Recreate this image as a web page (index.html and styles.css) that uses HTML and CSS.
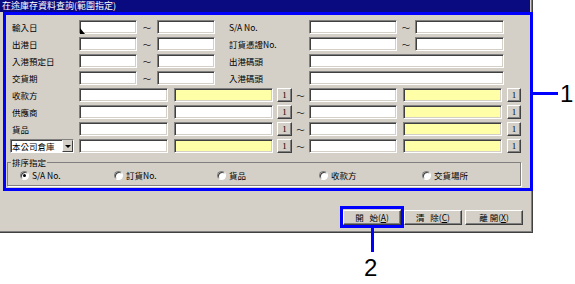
FILE: index.html
```html
<!DOCTYPE html>
<html lang="zh-Hant">
<head>
    <meta charset="UTF-8">
    <title>在途庫存資料查詢</title>
    <link rel="stylesheet" href="styles.css">
</head>
<body>
<div class="page">
    <div class="window">
        <div class="titlebar">在途庫存資料查詢(範圍指定)</div>

        <div class="fields">
            <div class="row">
                <span class="label">輸入日</span>
                <span class="box w58 first"></span>
                <span class="tilde">〜</span>
                <span class="box w58"></span>
                <span class="label label2">S/A No.</span>
                <span class="box w88"></span>
                <span class="tilde t18">〜</span>
                <span class="box w89"></span>
            </div>
            <div class="row">
                <span class="label">出港日</span>
                <span class="box w58"></span>
                <span class="tilde">〜</span>
                <span class="box w58"></span>
                <span class="label label2">訂貨憑證No.</span>
                <span class="box w88"></span>
                <span class="tilde t18">〜</span>
                <span class="box w89"></span>
            </div>
            <div class="row">
                <span class="label">入港預定日</span>
                <span class="box w58"></span>
                <span class="tilde">〜</span>
                <span class="box w58"></span>
                <span class="label label2">出港碼頭</span>
                <span class="box w195"></span>
            </div>
            <div class="row">
                <span class="label">交貨期</span>
                <span class="box w58"></span>
                <span class="tilde">〜</span>
                <span class="box w58"></span>
                <span class="label label2">入港碼頭</span>
                <span class="box w195"></span>
            </div>

            <div class="row">
                <span class="label">收款方</span>
                <span class="box w89"></span>
                <span class="box yellow"></span>
                <span class="pick">1</span>
                <span class="tilde t17">〜</span>
                <span class="box w88"></span>
                <span class="box yellow"></span>
                <span class="pick last">1</span>
            </div>
            <div class="row">
                <span class="label">供應商</span>
                <span class="box w89"></span>
                <span class="box plain"></span>
                <span class="pick">1</span>
                <span class="tilde t17">〜</span>
                <span class="box w88"></span>
                <span class="box yellow"></span>
                <span class="pick last">1</span>
            </div>
            <div class="row">
                <span class="label">貨品</span>
                <span class="box w89"></span>
                <span class="box plain"></span>
                <span class="pick">1</span>
                <span class="tilde t17">〜</span>
                <span class="box w88"></span>
                <span class="box yellow"></span>
                <span class="pick last">1</span>
            </div>
            <div class="row">
                <span class="select">本公司倉庫<span class="drop"></span></span>
                <span class="box w89"></span>
                <span class="box yellow"></span>
                <span class="pick">1</span>
                <span class="tilde t17">〜</span>
                <span class="box w88"></span>
                <span class="box yellow"></span>
                <span class="pick last">1</span>
            </div>
        </div>

        <fieldset class="group">
            <legend>排序指定</legend>
            <div class="radios">
                <span class="radio r1"><span class="dot checked"></span>S/A No.</span>
                <span class="radio r2"><span class="dot"></span>訂貨No.</span>
                <span class="radio r3"><span class="dot"></span>貨品</span>
                <span class="radio r2"><span class="dot"></span>收款方</span>
                <span class="radio"><span class="dot"></span>交貨場所</span>
            </div>
        </fieldset>

        <div class="actions">
            <span class="btn">開&nbsp;&nbsp;&nbsp;始(<u>A</u>)</span>
            <span class="btn">清&nbsp;&nbsp;&nbsp;除(<u>C</u>)</span>
            <span class="btn">離&nbsp;開(<u>X</u>)</span>
        </div>
    </div>

    <!-- callouts -->
    <svg class="cursor" width="6" height="6" viewBox="0 0 6 6"><polygon points="0,0 0,6 5,6" fill="#000"/></svg>
    <div class="mark mark1"></div>
    <div class="lead lead1"></div>
    <div class="num num1">1</div>
    <div class="mark mark2"></div>
    <div class="lead lead2"></div>
    <div class="num num2">2</div>
</div>
</body>
</html>
```

FILE: styles.css
```css
body{
    margin: 0;
    background: #fff;
    font-family: "Noto Sans CJK TC", sans-serif;
    font-size: 8.5px;
    color: #000;
}
.page{
    position: relative;
    width: 575px;
    height: 284px;
}
.window{
    width: 533px;
    height: 233px;
    box-sizing: border-box;
    background: #d4d0c8;
    border-right: 1px solid #404040;
    border-bottom: 1px solid #404040;
    box-shadow: inset -1px -1px #808080;
    padding: 0 2px 2px 0;
}
.titlebar{
    height: 12px;
    background: #0a0a80;
    color: #fff;
    font-size: 9px;
    line-height: 12px;
    padding-left: 2px;
    white-space: nowrap;
}

/* input rows */
.fields{
    padding: 8px 0 0 12px;
}
.row{
    display: flex;
    align-items: center;
    height: 14px;
    margin-bottom: 3px;
}
.label{
    width: 67px;
    flex: none;
    white-space: nowrap;
    line-height: 14px;
}
.label2{
    width: 80px;
    margin-left: 14px;
}
.box{
    flex: none;
    height: 14px;
    box-sizing: border-box;
    background: #fff;
    border: 1px solid;
    border-color: #808080 #fff #fff #808080;
    box-shadow: inset 1px 1px #404040, inset -1px -1px #d4d0c8;
}
.w58{ width: 58px; }
.w88{ width: 88px; }
.w89{ width: 89px; }
.w195{ width: 195px; }
.yellow, .plain{
    width: 99px;
    margin-left: 6px;
}
.yellow{
    background: #ffffa8;
}
.tilde{
    flex: none;
    width: 20px;
    text-align: center;
    color: #202020;
    line-height: 14px;
}
.t18{ width: 18px; }
.t17{ width: 17px; }
.pick{
    flex: none;
    width: 15px;
    height: 14px;
    margin-left: 4px;
    box-sizing: border-box;
    background: #d4d0c8;
    border: 1px solid;
    border-color: #fff #404040 #404040 #fff;
    box-shadow: inset -1px -1px #808080;
    font-family: "Liberation Serif", serif;
    font-size: 9px;
    line-height: 12px;
    text-align: center;
}
.pick.last{
    width: 14px;
    margin-left: 5px;
}
.select{
    flex: none;
    display: flex;
    align-items: center;
    width: 64px;
    height: 14px;
    margin-left: -2px;
    margin-right: 5px;
    box-sizing: border-box;
    padding-left: 1px;
    background: #fff;
    border: 1px solid;
    border-color: #808080 #fff #fff #808080;
    box-shadow: inset 1px 1px #404040;
    white-space: nowrap;
    line-height: 12px;
}
.drop{
    margin-left: auto;
    width: 11px;
    height: 12px;
    box-sizing: border-box;
    background: #d4d0c8;
    border: 1px solid;
    border-color: #d4d0c8 #404040 #404040 #fff;
    display: flex;
    justify-content: center;
    align-items: center;
}
.drop::after{
    content: "";
    border-left: 3px solid transparent;
    border-right: 3px solid transparent;
    border-top: 3px solid #000;
}

/* sort group */
.group{
    margin: 0 0 0 7px;
    padding: 0 0 4px 12px;
    width: 514px;
    box-sizing: border-box;
    border: 1px solid #808080;
    box-shadow: 1px 1px 0 #fff;
    min-inline-size: 0;
}
.group legend{
    padding: 0 1px;
    margin-left: -9px;
    line-height: 12px;
}
.radios{
    display: flex;
    height: 12px;
    padding-top: 1px;
}
.radio{
    display: flex;
    align-items: center;
    width: 94px;
    white-space: nowrap;
}
.r2{ width: 103px; }
.r3{ width: 102px; }
.dot{
    position: relative;
    width: 9px;
    height: 9px;
    margin-right: 3px;
    box-sizing: border-box;
    border-radius: 50%;
    background: #fff;
    border: 1px solid;
    border-color: #808080 #fff #fff #808080;
    box-shadow: inset 1px 1px #404040;
}
.dot.checked::after{
    content: "";
    position: absolute;
    left: 2px;
    top: 2px;
    width: 3px;
    height: 3px;
    border-radius: 50%;
    background: #000;
}

/* buttons */
.actions{
    display: flex;
    justify-content: flex-end;
    gap: 3px;
    margin-top: 24px;
    padding-right: 7px;
}
.btn{
    width: 58px;
    height: 15px;
    box-sizing: border-box;
    background: #d4d0c8;
    border: 1px solid;
    border-color: #fff #404040 #404040 #fff;
    box-shadow: inset -1px -1px #808080;
    text-align: center;
    line-height: 13px;
    white-space: nowrap;
}

/* annotation overlay */
.cursor{
    position: absolute;
    left: 80px;
    top: 28px;
}
.mark{
    position: absolute;
    border: 3px solid #0000ff;
}
.mark1{
    left: 3px;
    top: 12px;
    width: 524px;
    height: 173px;
}
.mark2{
    left: 340px;
    top: 206px;
    width: 58px;
    height: 16px;
}
.lead{
    position: absolute;
    background: #0000ff;
}
.lead1{
    left: 533px;
    top: 92px;
    width: 25px;
    height: 3px;
}
.lead2{
    left: 371px;
    top: 228px;
    width: 3px;
    height: 24px;
}
.num{
    position: absolute;
    font-family: "Liberation Sans", Arial, sans-serif;
    font-size: 24px;
    line-height: 24px;
}
.num1{
    left: 560px;
    top: 82px;
}
.num2{
    left: 364px;
    top: 256px;
}
```
